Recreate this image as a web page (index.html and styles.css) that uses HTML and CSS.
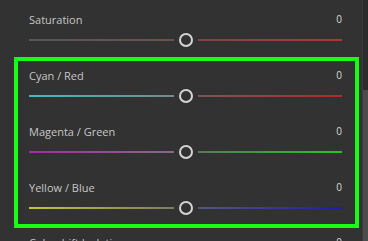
FILE: index.html
```html
<!DOCTYPE html>
<html lang="en">
    <head>
        <meta charset="UTF-8" />
        <meta name="viewport" content="width=device-width, initial-scale=1.0"/>
        <title>Color Balance</title>
        <link rel="stylesheet" href="styles.css">
    </head>
    <body>
        <div class="panel">
            <div class="content">
                <div class="row">
                    <div class="head">
                        <span class="label">Saturation</span>
                        <span class="value">0</span>
                    </div>
                    <div class="slider">
                        <div class="track sat-left"></div>
                        <div class="knob"></div>
                        <div class="track sat-right"></div>
                    </div>
                </div>
                <div class="highlight">
                    <div class="row">
                        <div class="head">
                            <span class="label">Cyan / Red</span>
                            <span class="value">0</span>
                        </div>
                        <div class="slider">
                            <div class="track cyan"></div>
                            <div class="knob"></div>
                            <div class="track red"></div>
                        </div>
                    </div>
                    <div class="row">
                        <div class="head">
                            <span class="label">Magenta / Green</span>
                            <span class="value">0</span>
                        </div>
                        <div class="slider">
                            <div class="track magenta"></div>
                            <div class="knob"></div>
                            <div class="track green"></div>
                        </div>
                    </div>
                    <div class="row">
                        <div class="head">
                            <span class="label">Yellow / Blue</span>
                            <span class="value">0</span>
                        </div>
                        <div class="slider">
                            <div class="track yellow"></div>
                            <div class="knob"></div>
                            <div class="track blue"></div>
                        </div>
                    </div>
                </div>
                <div class="row">
                    <div class="head">
                        <span class="label">Colorshift Isolation</span>
                        <span class="value">0</span>
                    </div>
                </div>
            </div>
            <div class="scrollbar">
                <div class="thumb"></div>
            </div>
        </div>
    </body>
</html>
```
FILE: styles.css
```css
html, body {
    height: 100%;
}
body {
    margin: 0;
    background-color: #323232;
    font-family: "Open Sans", Arial, sans-serif;
    overflow: hidden;
}
.panel {
    display: flex;
    height: 100%;
}
.content {
    flex: 1;
    display: flex;
    flex-direction: column;
    padding: 5px 0 0 14px;
}
.content > .row {
    padding-left: 15px;
    padding-right: 17px;
}
.row {
    padding: 6px 13px 9px 11px;
}
.highlight {
    margin-top: 1px;
    border: 4px solid #17ff17;
    display: flex;
    flex-direction: column;
    gap: 5px;
}
.content > .highlight + .row {
    padding-top: 6px;
}
.head {
    display: flex;
    justify-content: space-between;
    align-items: center;
    height: 16px;
}
.label {
    font-size: 11px;
    color: #c6c6c6;
}
.value {
    font-size: 10px;
    color: #d8d8d8;
}
.slider {
    display: flex;
    align-items: center;
    height: 14px;
    margin-top: 6px;
}
.track {
    flex: 1;
    height: 2px;
}
.knob {
    width: 14px;
    height: 14px;
    margin: 0 5px;
    border: 2px solid #d4d4d4;
    border-radius: 50%;
    box-sizing: border-box;
}
.sat-left {
    background: linear-gradient(to right, #575757, #6a5252);
}
.sat-right {
    background: linear-gradient(to right, #7c4848, #b23434);
}
.cyan {
    background: linear-gradient(to right, #3cbcc4, #748a8a);
}
.red {
    background: linear-gradient(to right, #7a5656, #b42828);
}
.magenta {
    background: linear-gradient(to right, #a62aa6, #866a86);
}
.green {
    background: linear-gradient(to right, #587a58, #22c622);
}
.yellow {
    background: linear-gradient(to right, #c4c43a, #7c7c60);
}
.blue {
    background: linear-gradient(to right, #56567e, #1c1cac);
}
.scrollbar {
    width: 5px;
    margin-left: 3px;
    background-color: #2c2c2c;
    border-left: 1px solid #3c3c3c;
    padding-top: 90px;
}
.thumb {
    height: 400px;
    background-color: #4c4c4c;
}
```
